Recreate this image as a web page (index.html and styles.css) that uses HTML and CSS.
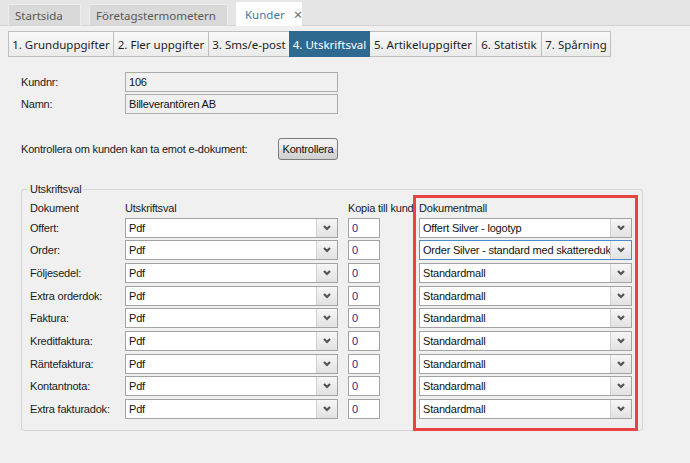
FILE: index.html
```html
<!DOCTYPE html>
<html lang="sv">
<head>
<meta charset="utf-8">
<title>Kunder</title>
<link rel="stylesheet" href="styles.css">
</head>
<body>
<div class="topbar">
  <div class="ttab">Startsida</div>
  <div class="ttab">Företagstermometern</div>
  <div class="ttab active">Kunder <span class="close">×</span></div>
</div>
<div class="subtabs">
  <div class="stab">1. Grunduppgifter</div>
  <div class="stab">2. Fler uppgifter</div>
  <div class="stab">3. Sms/e-post</div>
  <div class="stab active">4. Utskriftsval</div>
  <div class="stab">5. Artikeluppgifter</div>
  <div class="stab">6. Statistik</div>
  <div class="stab">7. Spårning</div>
</div>
<div class="form">
  <div class="idgrid">
    <div class="lbl">Kundnr:</div>
    <div class="ro">106</div>
    <div class="lbl">Namn:</div>
    <div class="ro">Billeverantören AB</div>
  </div>
  <div class="checkrow">
    <div class="checklbl">Kontrollera om kunden kan ta emot e-dokument:</div>
    <div class="btn">Kontrollera</div>
  </div>
  <fieldset class="group">
    <legend>Utskriftsval</legend>
    <div class="grid">
      <div class="hdr">Dokument</div>
      <div class="hdr">Utskriftsval</div>
      <div class="hdr nowrap">Kopia till kund</div>
      <div class="hdr">Dokumentmall</div>

      <div class="lbl">Offert:</div>
      <div class="sel"><span class="val">Pdf</span><span class="dd"><svg viewBox="0 0 10 6" width="10" height="6"><polyline points="2,1 5,4 8,1" /></svg></span></div>
      <div class="num">0</div>
      <div class="sel"><span class="val">Offert Silver - logotyp</span><span class="dd"><svg viewBox="0 0 10 6" width="10" height="6"><polyline points="2,1 5,4 8,1" /></svg></span></div>

      <div class="lbl">Order:</div>
      <div class="sel"><span class="val">Pdf</span><span class="dd"><svg viewBox="0 0 10 6" width="10" height="6"><polyline points="2,1 5,4 8,1" /></svg></span></div>
      <div class="num">0</div>
      <div class="sel focus"><span class="val">Order Silver - standard med skattereduktion</span><span class="dd"><svg viewBox="0 0 10 6" width="10" height="6"><polyline points="2,1 5,4 8,1" /></svg></span></div>

      <div class="lbl">Följesedel:</div>
      <div class="sel"><span class="val">Pdf</span><span class="dd"><svg viewBox="0 0 10 6" width="10" height="6"><polyline points="2,1 5,4 8,1" /></svg></span></div>
      <div class="num">0</div>
      <div class="sel"><span class="val">Standardmall</span><span class="dd"><svg viewBox="0 0 10 6" width="10" height="6"><polyline points="2,1 5,4 8,1" /></svg></span></div>

      <div class="lbl">Extra orderdok:</div>
      <div class="sel"><span class="val">Pdf</span><span class="dd"><svg viewBox="0 0 10 6" width="10" height="6"><polyline points="2,1 5,4 8,1" /></svg></span></div>
      <div class="num">0</div>
      <div class="sel"><span class="val">Standardmall</span><span class="dd"><svg viewBox="0 0 10 6" width="10" height="6"><polyline points="2,1 5,4 8,1" /></svg></span></div>

      <div class="lbl">Faktura:</div>
      <div class="sel"><span class="val">Pdf</span><span class="dd"><svg viewBox="0 0 10 6" width="10" height="6"><polyline points="2,1 5,4 8,1" /></svg></span></div>
      <div class="num">0</div>
      <div class="sel"><span class="val">Standardmall</span><span class="dd"><svg viewBox="0 0 10 6" width="10" height="6"><polyline points="2,1 5,4 8,1" /></svg></span></div>

      <div class="lbl">Kreditfaktura:</div>
      <div class="sel"><span class="val">Pdf</span><span class="dd"><svg viewBox="0 0 10 6" width="10" height="6"><polyline points="2,1 5,4 8,1" /></svg></span></div>
      <div class="num">0</div>
      <div class="sel"><span class="val">Standardmall</span><span class="dd"><svg viewBox="0 0 10 6" width="10" height="6"><polyline points="2,1 5,4 8,1" /></svg></span></div>

      <div class="lbl">Räntefaktura:</div>
      <div class="sel"><span class="val">Pdf</span><span class="dd"><svg viewBox="0 0 10 6" width="10" height="6"><polyline points="2,1 5,4 8,1" /></svg></span></div>
      <div class="num">0</div>
      <div class="sel"><span class="val">Standardmall</span><span class="dd"><svg viewBox="0 0 10 6" width="10" height="6"><polyline points="2,1 5,4 8,1" /></svg></span></div>

      <div class="lbl">Kontantnota:</div>
      <div class="sel"><span class="val">Pdf</span><span class="dd"><svg viewBox="0 0 10 6" width="10" height="6"><polyline points="2,1 5,4 8,1" /></svg></span></div>
      <div class="num">0</div>
      <div class="sel"><span class="val">Standardmall</span><span class="dd"><svg viewBox="0 0 10 6" width="10" height="6"><polyline points="2,1 5,4 8,1" /></svg></span></div>

      <div class="lbl">Extra fakturadok:</div>
      <div class="sel"><span class="val">Pdf</span><span class="dd"><svg viewBox="0 0 10 6" width="10" height="6"><polyline points="2,1 5,4 8,1" /></svg></span></div>
      <div class="num">0</div>
      <div class="sel"><span class="val">Standardmall</span><span class="dd"><svg viewBox="0 0 10 6" width="10" height="6"><polyline points="2,1 5,4 8,1" /></svg></span></div>
    </div>
  </fieldset>
</div>
<div class="highlight"></div>
</body>
</html>
```
FILE: styles.css
```css
* { box-sizing: border-box; }
html, body { margin: 0; padding: 0; }
body {
  width: 690px;
  height: 463px;
  overflow: hidden;
  background: #f0f0f0;
  font-family: "Liberation Sans", Arial, sans-serif;
  font-size: 11px;
  letter-spacing: -0.2px;
  color: #1a1a1a;
  position: relative;
}
.topbar {
  height: 26px;
  background: #e5e5e5;
  border-bottom: 1px solid #d4d4d4;
  display: flex;
  align-items: flex-end;
  gap: 8px;
  padding-left: 8px;
  letter-spacing: 0;
}
.ttab {
  height: 22px;
  margin-bottom: -1px;
  padding: 0 6px;
  display: flex;
  align-items: center;
  background: #d9d9d9;
  border: 1px solid #ededed;
  border-bottom: 1px solid #d4d4d4;
  font-family: "Noto Sans", sans-serif;
  font-size: 11.5px;
  color: #585858;
}
.ttab:nth-child(1) { width: 73px; }
.ttab:nth-child(2) { width: 139px; }
.ttab.active {
  height: 24px;
  width: 66px;
  background: #ffffff;
  border-color: #ffffff;
  color: #3f76a6;
  padding-left: 8px;
}
.close {
  margin-left: 9px;
  color: #707070;
  font-size: 15px;
  line-height: 1;
}
.subtabs {
  display: flex;
  margin: 5px 0 0 8px;
  letter-spacing: 0;
}
.stab {
  height: 26px;
  display: flex;
  align-items: center;
  justify-content: center;
  border: 1px solid #bfbfbf;
  margin-left: -1px;
  background: linear-gradient(#f8f8f8, #ebebeb);
  font-family: "Noto Sans", sans-serif;
  font-size: 11.5px;
  color: #1e1e1e;
}
.stab:first-child { margin-left: 0; }
.stab:nth-child(1) { width: 106px; }
.stab:nth-child(2) { width: 96px; }
.stab:nth-child(3) { width: 82px; }
.stab:nth-child(4) { width: 81px; }
.stab:nth-child(5) { width: 108px; }
.stab:nth-child(6) { width: 66px; }
.stab:nth-child(7) { width: 70px; }
.stab.active {
  background: #2e6a90;
  border-color: #2e6a90;
  color: #ffffff;
  position: relative;
}
.form {
  padding: 15px 0 0 21px;
}
.idgrid {
  display: grid;
  grid-template-columns: 104px 213px;
  grid-auto-rows: 20px;
  row-gap: 2px;
}
.lbl {
  display: flex;
  align-items: center;
  white-space: nowrap;
}
.ro {
  border: 1px solid #acacac;
  background: #f0f0f0;
  display: flex;
  align-items: center;
  padding-left: 3px;
  color: #111;
}
.checkrow {
  display: flex;
  align-items: center;
  margin-top: 24px;
}
.checklbl { width: 257px; }
.btn {
  width: 60px;
  height: 22px;
  border: 1px solid #7a7a7a;
  border-radius: 3px;
  background: linear-gradient(#f3f3f3 0%, #ebebeb 50%, #dddddd 51%, #d0d0d0 100%);
  display: flex;
  align-items: center;
  justify-content: center;
  color: #111;
}
.group {
  margin: 23px 0 0 0;
  width: 622px;
  border: 1px solid #d5d5d5;
  border-radius: 3px;
  padding: 0 0 11px 8px;
  min-width: 0;
}
.group legend {
  padding: 0 2px;
  margin-left: -2px;
  line-height: 13px;
}
.grid {
  display: grid;
  grid-template-columns: 95px 223px 71px 213px;
  grid-template-rows: 13px;
  grid-auto-rows: 20px;
  row-gap: 2.67px;
  margin-top: 6px;
}
.hdr {
  line-height: 13px;
  margin-bottom: 4px;
  white-space: nowrap;
}
.sel {
  width: 213px;
  border: 1px solid #a3a3a3;
  background: #ffffff;
  display: flex;
  align-items: stretch;
  overflow: hidden;
}
.sel.focus { border-color: #4a8ccc; }
.val {
  flex: 1;
  padding-left: 3px;
  display: flex;
  align-items: center;
  white-space: nowrap;
  overflow: hidden;
  color: #111;
}
.dd {
  width: 21px;
  flex: none;
  border-left: 1px solid #d0d0d0;
  background: linear-gradient(#f6f6f6, #e2e2e2);
  display: flex;
  align-items: center;
  justify-content: center;
}
.dd svg polyline {
  fill: none;
  stroke: #555555;
  stroke-width: 2.2;
}
.num {
  width: 32px;
  border: 1px solid #a3a3a3;
  background: #ffffff;
  padding-left: 3px;
  display: flex;
  align-items: center;
  color: #1a2b80;
}
.highlight {
  position: absolute;
  left: 413px;
  top: 195px;
  width: 225px;
  height: 236px;
  border: 3px solid #e84444;
  pointer-events: none;
}
```
